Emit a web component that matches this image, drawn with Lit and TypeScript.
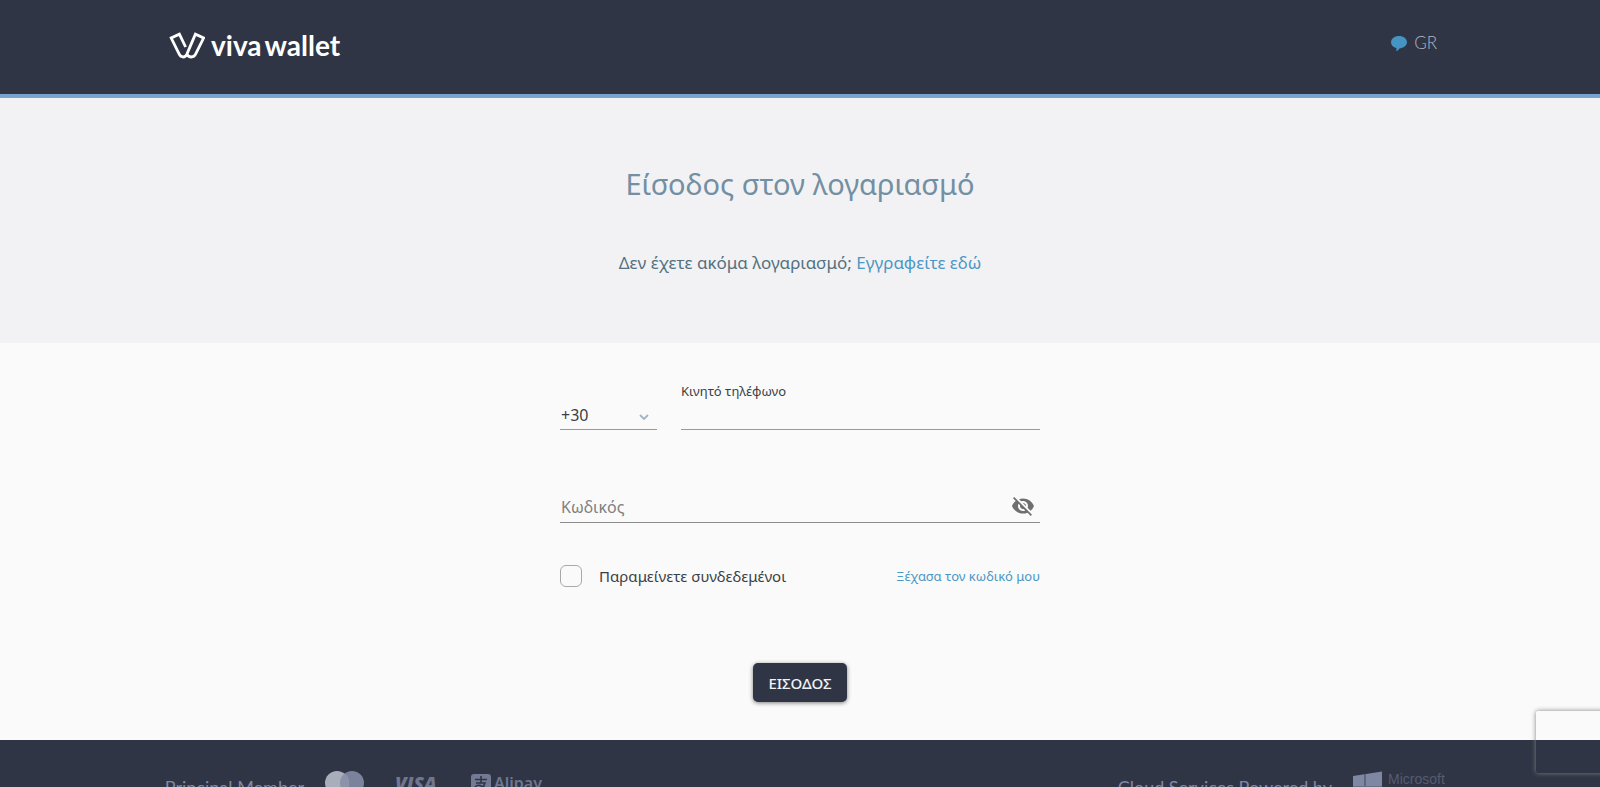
import { LitElement, html, css } from "lit";
import { customElement, state } from "lit/decorators.js";

@customElement("app-root")
export class AppRoot extends LitElement {
  @state() private showPassword = false;

  static styles = css`
    :host {
      display: block;
      min-height: 100vh;
      background: #fafafa;
      color: #3c3f45;
      font-family: "Noto Sans", "Open Sans", sans-serif;
      font-size: 16px;
      line-height: 24px;
    }
    * {
      box-sizing: border-box;
    }
    a {
      color: #4b97c5;
      text-decoration: none;
    }
    .header {
      background: #2f3545;
      border-bottom: 4px solid #78a2cf;
      padding: 0 10%;
    }
    .header-inner {
      display: flex;
      justify-content: space-between;
      align-items: flex-start;
      padding: 28px 3px 32px 9px;
    }
    .brand {
      display: flex;
      align-items: center;
      gap: 6px;
      color: #fff;
      font-family: Lato, sans-serif;
      font-weight: 700;
      font-size: 28px;
      line-height: 34px;
    }
    .brand svg {
      width: 36px;
      height: 34px;
    }
    .wordmark {
      display: flex;
      gap: 3px;
    }
    .lang {
      display: flex;
      align-items: center;
      gap: 7px;
      padding: 0;
      margin-top: 3px;
      border: 0;
      background: none;
      color: #b4b7c0;
      font: 300 17px/24px Lato, sans-serif;
    }
    .lang svg {
      width: 16px;
      height: 16px;
    }
    .hero {
      background: #f2f2f4;
      padding: 64px 24px 68px;
      text-align: center;
    }
    .hero h1 {
      margin: 0;
      color: #728fa3;
      font-weight: 400;
      font-size: 29px;
      line-height: 44px;
    }
    .hero p {
      margin: 45px 0 0;
      color: #54717f;
      font-size: 17px;
    }
    .form {
      width: 100%;
      max-width: 480px;
      margin: 0 auto;
      padding: 38px 0;
      display: flex;
      flex-direction: column;
    }
    .phone {
      display: flex;
      align-items: flex-end;
      gap: 24px;
    }
    .code {
      position: relative;
      width: 97px;
    }
    .code select {
      appearance: none;
      display: block;
      width: 100%;
      height: 28px;
      padding: 0 0 2px 1px;
      border: 0;
      border-bottom: 1px solid #999;
      border-radius: 0;
      background: none;
      color: #3c3f45;
      font: inherit;
    }
    .code svg {
      position: absolute;
      right: 8px;
      top: 12px;
      width: 10px;
      height: 6px;
      pointer-events: none;
    }
    .field {
      flex: 1;
      display: flex;
      flex-direction: column;
    }
    .field label {
      font-size: 13px;
      line-height: 20px;
    }
    .field input,
    .password input {
      width: 100%;
      padding: 0 0 0 1px;
      border: 0;
      border-bottom: 1px solid #999;
      border-radius: 0;
      background: none;
      color: #3c3f45;
      font: inherit;
      outline: none;
    }
    .field input {
      height: 29px;
    }
    .password {
      display: flex;
      align-items: flex-start;
      margin-top: 62px;
      border-bottom: 1px solid #8c8c8c;
    }
    .password input {
      flex: 1;
      height: 30px;
      border: 0;
    }
    .password input::placeholder {
      color: #808080;
      opacity: 1;
    }
    .eye {
      display: block;
      width: 24px;
      height: 24px;
      margin: 2px 5px 0;
      padding: 0;
      border: 0;
      background: none;
    }
    .eye svg {
      display: block;
      width: 24px;
      height: 24px;
      fill: #6f6f6f;
    }
    .options {
      display: flex;
      justify-content: space-between;
      align-items: center;
      margin-top: 42px;
    }
    .remember {
      display: flex;
      align-items: center;
      gap: 17px;
      font-size: 15px;
      line-height: 22px;
    }
    .remember input {
      appearance: none;
      width: 22px;
      height: 22px;
      margin: 0;
      border: 1px solid #a8a8a8;
      border-radius: 6px;
      background: #fafafa;
    }
    .remember input:checked {
      background: #4b97c5;
    }
    .options a {
      font-size: 13px;
      line-height: 20px;
    }
    .submit {
      align-self: center;
      min-width: 94px;
      height: 39px;
      margin-top: 76px;
      padding: 0 15px;
      border: 0;
      border-radius: 5px;
      background: #2f3545;
      box-shadow: 0 1px 4px rgba(0, 0, 0, 0.5);
      color: #f0f2f5;
      font: 500 15px/22px "Noto Sans", sans-serif;
    }
    .footer {
      background: #2f3545;
      color: #7f88a3;
      padding: 30px 9.5% 30px 10.3%;
    }
    .footer-inner {
      display: flex;
      justify-content: space-between;
      align-items: flex-start;
    }
    .group {
      display: flex;
      align-items: flex-start;
    }
    .group p {
      margin: 5px 0 0;
      font-family: Lato, sans-serif;
      font-size: 18px;
      line-height: 24px;
    }
    .logo {
      display: block;
      overflow: visible;
    }
    .mastercard {
      width: 40px;
      height: 32px;
      margin-left: 21px;
    }
    .visa {
      width: 44px;
      height: 26px;
      margin-left: 29px;
    }
    .alipay {
      width: 72px;
      height: 26px;
      margin-left: 33px;
    }
    .microsoft {
      width: 95px;
      height: 34px;
      margin-left: 21px;
    }
    .badge {
      position: fixed;
      right: -186px;
      bottom: 14px;
      width: 250px;
      height: 62px;
      border-radius: 2px;
      box-shadow: 0 0 5px #808080;
    }
  `;

  render() {
    return html`
      <header class="header">
        <div class="header-inner">
          <a class="brand" href="#">
            <svg viewBox="0 0 36 34" fill="none" stroke="#fff" stroke-width="2.800" stroke-linejoin="miter" aria-hidden="true">
              <path d="M16.600 19 10.400 6.200 2.200 10 10.200 26.200Q11.600 29 14.200 29 16.600 29 17.800 26.400L26.400 6.200 34.600 10 26.600 26.200Q25.200 29 22.400 29 19.200 29 18 26.400" />
            </svg>
            <span class="wordmark"><span>viva</span><span>wallet</span></span>
          </a>
          <button class="lang" type="button">
            <svg viewBox="0 0 16 16" fill="#4594c3" aria-hidden="true">
              <path d="M8 1C12.400 1 16 3.700 16 7.200C16 10.500 12.500 13.100 8.300 13.400C7.800 14.800 6.700 15.800 5 16C5.600 15 5.700 14 5.300 13.100C2.200 12.300 0 10 0 7.200C0 3.700 3.600 1 8 1Z" />
            </svg>
            <span>GR</span>
          </button>
        </div>
      </header>

      <section class="hero">
        <h1>Είσοδος στον λογαριασμό</h1>
        <p>Δεν έχετε ακόμα λογαριασμό; <a href="#">Εγγραφείτε εδώ</a></p>
      </section>

      <form class="form" @submit=${(e: Event) => e.preventDefault()}>
        <div class="phone">
          <div class="code">
            <select aria-label="Κωδικός χώρας">
              <option>+30</option>
            </select>
            <svg viewBox="0 0 10 6" fill="none" stroke="#a3b4c6" stroke-width="1.800" aria-hidden="true">
              <path d="M1 1 5 5 9 1" />
            </svg>
          </div>
          <div class="field">
            <label for="phone">Κινητό τηλέφωνο</label>
            <input id="phone" type="tel" />
          </div>
        </div>
        <div class="password">
          <input type=${this.showPassword ? "text" : "password"} placeholder="Κωδικός" aria-label="Κωδικός" />
          <button
            class="eye"
            type="button"
            aria-label="Εμφάνιση κωδικού"
            @click=${() => (this.showPassword = !this.showPassword)}
          >
            <svg viewBox="0 0 24 24" aria-hidden="true">
              <path d="M12 7c2.760 0 5 2.240 5 5 0 .65-.13 1.260-.36 1.830l2.920 2.920c1.510-1.260 2.700-2.890 3.430-4.750-1.730-4.390-6-7.500-11-7.500-1.400 0-2.740.25-3.980.7l2.160 2.160C10.740 7.130 11.350 7 12 7zM2 4.270l2.280 2.280.46.46C3.080 8.300 1.780 10.020 1 12c1.730 4.390 6 7.500 11 7.500 1.550 0 3.030-.3 4.380-.84l.42.42L19.730 22 21 20.730 3.270 3 2 4.270zM7.530 9.800l1.550 1.550c-.05.21-.08.43-.08.65 0 1.660 1.340 3 3 3 .22 0 .44-.03.65-.08l1.550 1.550c-.67.33-1.410.53-2.200.53-2.760 0-5-2.240-5-5 0-.79.2-1.530.53-2.200zm4.310-.78l3.150 3.150.02-.16c0-1.660-1.340-3-3-3l-.17.01z" />
            </svg>
          </button>
        </div>
        <div class="options">
          <label class="remember"><input type="checkbox" />Παραμείνετε συνδεδεμένοι</label>
          <a href="#">Ξέχασα τον κωδικό μου</a>
        </div>
        <button class="submit" type="submit">ΕΙΣΟΔΟΣ</button>
      </form>

      <footer class="footer">
        <div class="footer-inner">
          <div class="group">
            <p>Principal Member</p>
            <svg class="logo mastercard" viewBox="0 0 40 32" role="img" aria-label="Mastercard">
              <circle cx="27" cy="13" r="12" fill="#7b839c" />
              <circle cx="12" cy="13" r="12" fill="#a9aeba" />
              <path d="M19.500 3.600A12 12 0 0 1 19.500 22.400A12 12 0 0 1 19.500 3.600Z" fill="#8b93aa" />
            </svg>
            <svg class="logo visa" viewBox="0 0 44 26" role="img" aria-label="Visa">
              <text x="1" y="21" font-family="Open Sans, sans-serif" font-size="19" font-weight="800" font-style="italic" fill="#6e7690">VISA</text>
            </svg>
            <svg class="logo alipay" viewBox="0 0 72 26" role="img" aria-label="Alipay">
              <rect x="0" y="4" width="20" height="20" rx="3" fill="#737b94" />
              <path d="M4 9.500H16M10 6V13M5 13H14Q12.500 18 7.500 19.500Q3.500 19.500 4.500 16.500Q7 14 11 16.500L20 20" fill="none" stroke="#2f3545" stroke-width="1.600" />
              <text x="23" y="19" font-family="Noto Sans, sans-serif" font-size="16" font-weight="600" fill="#6e7690">Alipay</text>
            </svg>
          </div>
          <div class="group">
            <p>Cloud Services Powered by</p>
            <svg class="logo microsoft" viewBox="0 0 95 34" role="img" aria-label="Microsoft Azure">
              <path d="M0 6 11.500 4.200V16H0ZM13 4 29 1.500V16H13ZM0 17.500H11.500V29L0 27.200ZM13 17.500H29V31.700L13 29.300Z" fill="#7f88a3" />
              <path d="M12.200 4V30M0 16.700H29" fill="none" stroke="#666e88" stroke-width="1.400" />
              <text x="35" y="14" font-family="Liberation Sans, sans-serif" font-size="14" fill="#555c70">Microsoft</text>
            </svg>
          </div>
        </div>
      </footer>
      <div class="badge"></div>
    `;
  }
}
